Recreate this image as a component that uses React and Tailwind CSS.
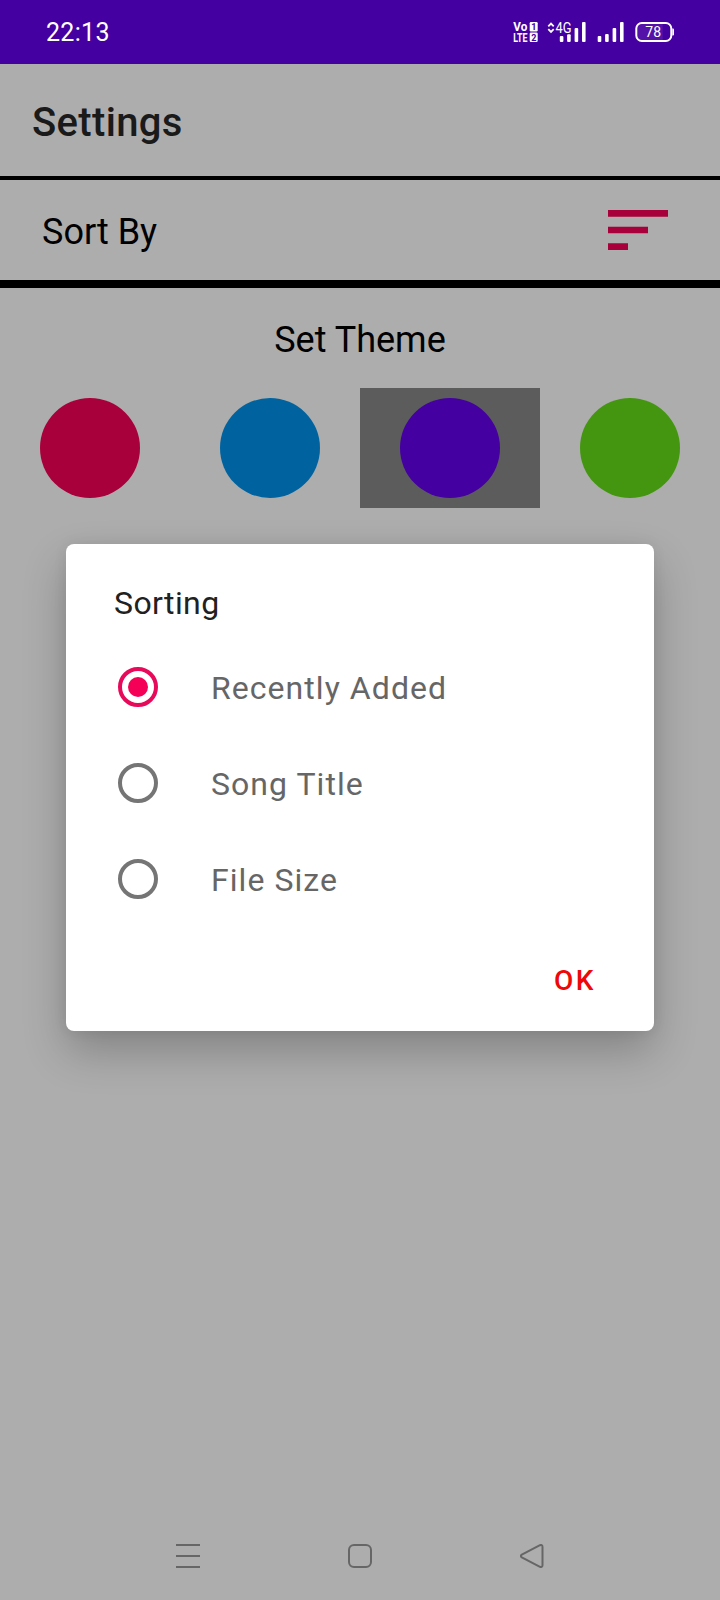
import React, { useState } from 'react';

const themes = [
    { id: 'pink', color: 'bg-[#a7003a]' },
    { id: 'blue', color: 'bg-[#00639f]' },
    { id: 'purple', color: 'bg-[#4400a0]' },
    { id: 'green', color: 'bg-[#449611]' },
];

const sortOptions = ['Recently Added', 'Song Title', 'File Size'];

const StatusIcons = () => (
    <svg width="164" height="24" viewBox="0 0 164 24" fill="white" className="font-['Roboto',sans-serif]">
        {/* VoLTE */}
        <g fontWeight="700" fontSize="13">
            <text x="1.3" y="11.2" textLength="14" lengthAdjust="spacingAndGlyphs">Vo</text>
            <text x="1.3" y="22" textLength="14.2" lengthAdjust="spacingAndGlyphs">LTE</text>
        </g>
        <rect x="17.7" y="2" width="8" height="9.5" rx="1.2" />
        <rect x="17.7" y="12.6" width="8" height="9.4" rx="1.2" />
        <g fill="#4400a0" fontWeight="700" fontSize="9">
            <text x="19.2" y="9.9">1</text>
            <text x="19.2" y="20.6">2</text>
        </g>
        {/* 4G signal */}
        <path d="m36.3 6.3 2.7-2.7 2.7 2.7M36.3 9.2l2.7 2.7 2.7-2.7" fill="none" stroke="white" strokeWidth="1.8" />
        <text x="43.5" y="12.8" fontSize="14.5" textLength="16" lengthAdjust="spacingAndGlyphs">4G</text>
        <rect x="47.8" y="16" width="3.6" height="6" rx="1" />
        <rect x="55.1" y="14.2" width="3.6" height="7.8" rx="1" />
        <rect x="62.6" y="8" width="3.6" height="14" rx="1" />
        <rect x="70" y="2" width="3.6" height="20" rx="1" />
        {/* second sim */}
        <rect x="85.7" y="16" width="3.6" height="6" rx="1" />
        <rect x="93.1" y="14" width="3.6" height="8" rx="1" />
        <rect x="100.6" y="8" width="3.6" height="14" rx="1" />
        <rect x="108" y="2" width="3.6" height="20" rx="1" />
        {/* battery */}
        <path d="M128 4h22.7v16H128a3.5 3.5 0 0 1-3.5-3.5v-9A3.5 3.5 0 0 1 128 4z" fill="#5512a9" />
        <rect x="136" y="3" width="35" height="18" rx="5.5" fill="none" stroke="white" strokeWidth="2" transform="translate(-11.7 0)" />
        <path d="M160.3 8.5h.7a1 1 0 0 1 1 1v5a1 1 0 0 1-1 1h-.7z" />
        <text x="133.3" y="16.9" fontSize="14">78</text>
    </svg>
);

const Radio = ({ checked }) => (
    <span
        className={`flex size-10 items-center justify-center rounded-full border-4 ${
            checked ? 'border-[#e80a5a]' : 'border-[#757575]'
        }`}
    >
        {checked && <span className="size-5 rounded-full bg-[#f50057]" />}
    </span>
);

const SortDialog = ({ sort, setSort }) => (
    <div className="absolute left-[66px] top-[544px] flex h-[487px] w-[588px] flex-col rounded-lg bg-white pt-[38px] shadow-[0_20px_44px_rgba(0,0,0,0.24),0_0_14px_rgba(0,0,0,0.07)]">
        <h2 className="pl-12 text-[32px] leading-[42px] tracking-[0.4px] text-[#212121]">Sorting</h2>
        <div className="mt-[15px] flex flex-col">
            {sortOptions.map((option) => (
                <button
                    key={option}
                    className="flex h-24 items-center pl-[52px] text-[32px] tracking-[1.05px] text-[#666]"
                    onClick={() => setSort(option)}
                >
                    <Radio checked={sort === option} />
                    <span className="ml-[53px] mt-0.5">{option}</span>
                </button>
            ))}
        </div>
        <button className="mr-[58px] mt-[34px] self-end text-[28px] font-medium leading-10 tracking-[2.5px] text-[#ee0808]">
            OK
        </button>
    </div>
);

const App = () => {
    const [theme, setTheme] = useState('purple');
    const [sort, setSort] = useState('Recently Added');

    return (
        <div className="relative flex h-[1600px] w-[720px] flex-col overflow-hidden bg-[#adadad] font-['Roboto',sans-serif] text-black">
            <div className="flex h-16 items-center justify-between bg-[#4400a0] pl-[46px] pr-11 text-white">
                <span className="text-[25px] leading-none tracking-[0.3px]">22:13</span>
                <StatusIcons />
            </div>

            <header className="flex h-[116px] items-center border-b-4 border-black pl-8 pt-1.5">
                <h1 className="text-[40px] font-medium tracking-[0.35px] text-[#1a1a1a]">Settings</h1>
            </header>

            <div className="flex h-[108px] items-center justify-between border-b-8 border-black pl-[42px] pr-[52px]">
                <span className="pt-1 text-4xl">Sort By</span>
                <svg width="60" height="40" viewBox="0 0 60 40" fill="#a7003a">
                    <path d="M0 0h60v6.67H0zM0 16.67h40v6.67H0zM0 33.33h20V40H0z" />
                </svg>
            </div>

            <h3 className="mt-8 text-center text-4xl">Set Theme</h3>
            <div className="mt-7 flex">
                {themes.map(({ id, color }) => (
                    <div
                        key={id}
                        className={`flex h-[120px] flex-1 items-center justify-center ${
                            theme === id ? 'bg-[#5c5c5c]' : ''
                        }`}
                        onClick={() => setTheme(id)}
                    >
                        <div className={`size-[100px] rounded-full ${color}`} />
                    </div>
                ))}
            </div>

            <nav className="mt-auto flex h-[88px] items-center justify-between px-[176px]">
                <svg width="24" height="24" fill="none" stroke="#666" strokeWidth="2">
                    <path d="M0 1h24M0 12h24M0 23h24" />
                </svg>
                <svg width="24" height="24" fill="none" stroke="#666" strokeWidth="2">
                    <rect x="1" y="1" width="22" height="22" rx="5" />
                </svg>
                <svg width="24" height="24" fill="none" stroke="#666" strokeWidth="2" strokeLinejoin="round">
                    <path d="M1.8 10.6 20 1.2Q22.5.3 22.5 3v18q0 2.7-2.5 1.8L1.8 13.4Q0 12 1.8 10.6z" />
                </svg>
            </nav>

            <SortDialog sort={sort} setSort={setSort} />
        </div>
    );
};

export default App;
